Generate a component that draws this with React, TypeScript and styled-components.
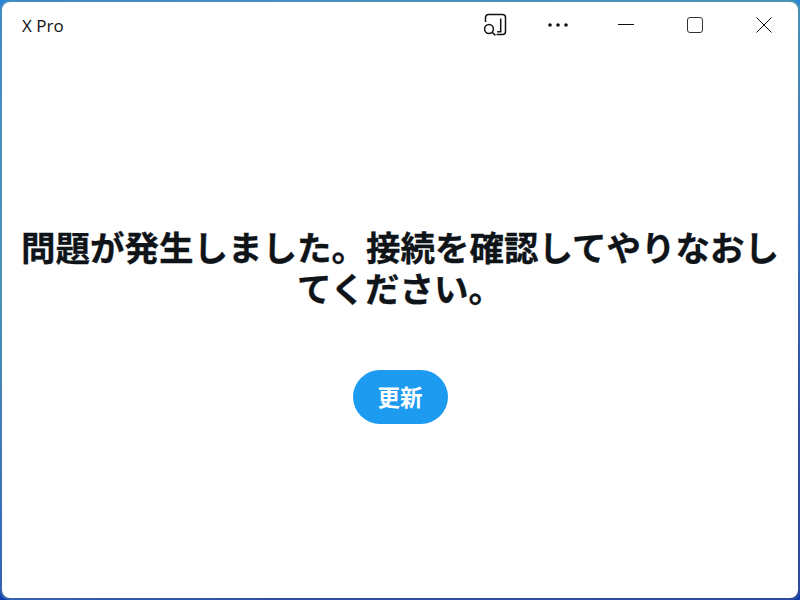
import React from "react";
import styled, { createGlobalStyle } from "styled-components";

const GlobalStyle = createGlobalStyle`
  html, body, #root {
    margin: 0;
    height: 100%;
  }
  body {
    overflow: hidden;
    font-family: "Noto Sans CJK JP", "Noto Sans", sans-serif;
  }
`;

const Desktop = styled.div`
  width: 800px;
  height: 600px;
  background: linear-gradient(180deg, #2a86d8 0%, #1a5cc4 70%, #0f3ca8 100%);
`;

const Frame = styled.div`
  box-sizing: border-box;
  height: 100%;
  padding: 2px;
  border-radius: 9px;
  background: linear-gradient(160deg, #3f8cc6 0%, #4c94b4 32%, #3a6fb6 58%, #2f4ea4 80%, #2f4a98 100%);
`;

const Win = styled.div`
  height: 100%;
  display: flex;
  flex-direction: column;
  background: #fff;
  border-radius: 8px;
  overflow: hidden;
`;

const TitleBar = styled.div`
  flex: none;
  height: 48px;
  display: flex;
  align-items: flex-start;
`;

const AppName = styled.div`
  flex: 1;
  padding-left: 20px;
  font-family: "Open Sans", "Noto Sans", sans-serif;
  font-size: 17px;
  line-height: 48px;
  color: #111;
`;

const TitleButton = styled.div<{ $w: number }>`
  width: ${(p) => p.$w}px;
  height: 46px;
  display: flex;
  align-items: center;
  justify-content: center;
  color: #111;
`;

const Content = styled.div`
  flex: 1;
  display: flex;
  flex-direction: column;
  align-items: center;
  padding: 0 16px;
`;

const Message = styled.div`
  margin-top: 176px;
  font-size: 34.5px;
  line-height: 41px;
  font-weight: 700;
  -webkit-text-stroke: 0.3px #0f1419;
  color: #0f1419;
  text-align: center;
  width: 100%;
`;

const Retry = styled.div`
  margin-top: 62px;
  width: 95px;
  height: 54px;
  border-radius: 27px;
  background: #1d9bf0;
  color: #fff;
  font-size: 22.5px;
  line-height: 52px;
  font-weight: 700;
  text-align: center;
`;

export default function App() {
  return (
    <Desktop>
      <GlobalStyle />
      <Frame>
        <Win>
          <TitleBar>
            <AppName>X Pro</AppName>
            <TitleButton $w={58}>
              <svg width="24" height="24" viewBox="0 0 24 24" fill="none" stroke="currentColor" strokeWidth="1.5">
                <path d="M2.5 9V4.5a3 3 0 0 1 3-3h14a3 3 0 0 1 3 3v14a3 3 0 0 1-3 3h-6" />
                <path d="M17.7 5.5v13.2h-3.5" />
                <circle cx="6" cy="16" r="4.4" />
                <path d="M9.2 19.2l3.2 3.2" />
              </svg>
            </TitleButton>
            <TitleButton $w={68}>
              <svg width="22" height="6" viewBox="0 0 22 6" fill="currentColor">
                <circle cx="3" cy="3" r="1.8" />
                <circle cx="11" cy="3" r="1.8" />
                <circle cx="19" cy="3" r="1.8" />
              </svg>
            </TitleButton>
            <TitleButton $w={68}>
              <svg width="16" height="2" viewBox="0 0 16 2" stroke="currentColor">
                <path d="M0 0.5h16" />
              </svg>
            </TitleButton>
            <TitleButton $w={69}>
              <svg width="16" height="16" viewBox="0 0 16 16" fill="none" stroke="#333">
                <rect x="0.5" y="0.5" width="15" height="15" rx="2.5" />
              </svg>
            </TitleButton>
            <TitleButton $w={69}>
              <svg width="16" height="16" viewBox="0 0 16 16" fill="none" stroke="currentColor">
                <path d="M0.5 0.5l15 15M15.5 0.5l-15 15" />
              </svg>
            </TitleButton>
          </TitleBar>
          <Content>
            <Message>問題が発生しました。接続を確認してやりなおしてください。</Message>
            <Retry>更新</Retry>
          </Content>
        </Win>
      </Frame>
    </Desktop>
  );
}
